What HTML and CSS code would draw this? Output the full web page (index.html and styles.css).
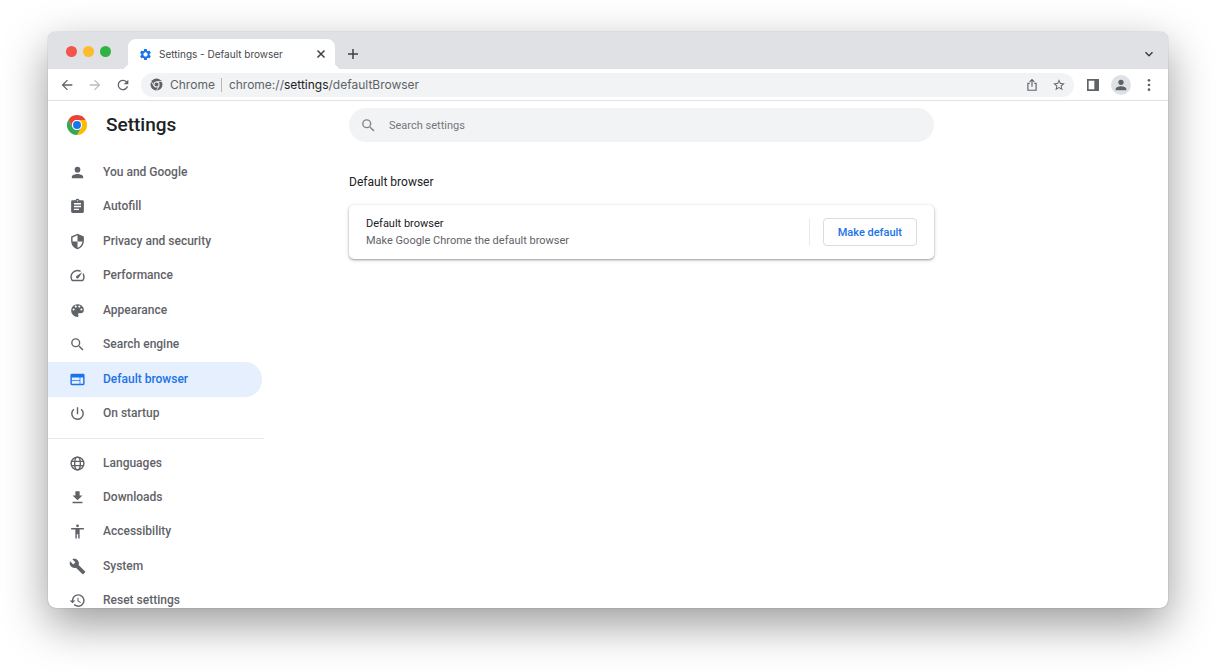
FILE: index.html
```
<!DOCTYPE html>
<html lang="en">
<head>
  <meta charset="UTF-8">
  <title>Settings - Default browser</title>
  <meta name="viewport" content="width=device-width, initial-scale=1.0">
  <link rel="stylesheet" href="styles.css">
</head>
<body>
  <div class="window">
    <!-- Tab strip -->
    <div class="tab-strip">
      <div class="lights">
        <button class="light red" aria-label="Close window"></button>
        <button class="light yellow" aria-label="Minimize"></button>
        <button class="light green" aria-label="Zoom"></button>
      </div>
      <div class="tab">
        <svg class="tab-icon" viewBox="0 0 24 24"><path fill-rule="evenodd" d="M19.400 13c0-.3.1-.6.1-1s0-.7-.1-1l2.200-1.700c.2-.2.2-.4.100-.6l-2.100-3.600c-.1-.2-.4-.3-.6-.2l-2.500 1c-.5-.4-1.100-.7-1.700-1l-.4-2.600c0-.2-.2-.4-.5-.4h-4c-.3 0-.5.2-.5.400l-.4 2.600c-.6.3-1.200.6-1.700 1l-2.500-1c-.2-.1-.5 0-.6.200L2.100 8.700c-.1.2-.1.5.1.600L4.500 11c0 .3-.1.600-.1 1s0 .7.1 1l-2.300 1.700c-.2.2-.2.4-.1.600l2.100 3.600c.1.2.4.3.6.2l2.500-1c.5.4 1.100.7 1.700 1l.4 2.600c0 .2.2.4.5.4h4c.3 0 .5-.2.5-.4l.4-2.600c.6-.3 1.200-.6 1.700-1l2.500 1c.2.1.5 0 .6-.2l2.100-3.600c.1-.2.1-.5-.1-.6zM12 16a4 4 0 1 1 0-8 4 4 0 0 1 0 8z"/></svg>
        <span class="tab-title">Settings - Default browser</span>
        <button class="icon-btn" aria-label="Close tab">
          <svg class="icon-close" viewBox="0 0 10 10"><path d="M1.500 1.500l7 7M8.500 1.500l-7 7"/></svg>
        </button>
      </div>
      <button class="icon-btn new-tab" aria-label="New tab">
        <svg class="icon-plus" viewBox="0 0 12 12"><path d="M6 1v10M1 6h10"/></svg>
      </button>
      <button class="icon-btn tab-search" aria-label="Search tabs">
        <svg class="icon-close" viewBox="0 0 10 10"><path d="M1.500 3.200L5 6.700l3.500-3.500"/></svg>
      </button>
    </div>

    <!-- Toolbar -->
    <div class="toolbar">
      <div class="nav-buttons">
        <button class="icon-btn" aria-label="Back">
          <svg viewBox="0 0 24 24"><path d="M20 11H7.800l5.600-5.600L12 4l-8 8 8 8 1.400-1.400L7.800 13H20z"/></svg>
        </button>
        <button class="icon-btn forward" aria-label="Forward">
          <svg viewBox="0 0 24 24"><path d="M12 4l-1.400 1.400 5.600 5.600H4v2h12.200l-5.600 5.600L12 20l8-8z"/></svg>
        </button>
        <button class="icon-btn" aria-label="Reload">
          <svg viewBox="0 0 24 24"><path d="M17.650 6.350A7.960 7.960 0 0 0 12 4a8 8 0 1 0 7.730 10h-2.080A6 6 0 1 1 12 6c1.660 0 3.140.690 4.220 1.780L13 11h7V4z"/></svg>
        </button>
      </div>
      <div class="omnibox">
        <svg class="site-icon" viewBox="0 0 24 24">
          <circle cx="12" cy="12" r="11"/>
          <path d="M12 6.500h10M7.200 14.700L2.400 6.400M16.800 14.700L12 23" stroke="#f1f3f4" stroke-width="1.500"/>
          <circle cx="12" cy="12" r="4.700" stroke="#f1f3f4" stroke-width="2"/>
        </svg>
        <span class="site-name">Chrome</span>
        <div class="url" role="textbox" contenteditable="true" aria-label="Address" spellcheck="false">chrome://<span class="host">settings</span>/defaultBrowser</div>
        <button class="icon-btn" aria-label="Share">
          <svg class="line" viewBox="0 0 24 24"><path d="M8.500 9H5v12h14V9h-3.500M12 15V3M8 6.500l4-4 4 4"/></svg>
        </button>
        <button class="icon-btn" aria-label="Bookmark">
          <svg viewBox="0 0 24 24"><path d="M22 9.240l-7.190-.62L12 2 9.190 8.630 2 9.240l5.460 4.730L5.820 21 12 17.270 18.180 21l-1.630-7.030zM12 15.400l-3.760 2.270 1-4.280-3.320-2.880 4.380-.38L12 6.100l1.710 4.040 4.380.38-3.320 2.880 1 4.280z"/></svg>
        </button>
      </div>
      <div class="actions">
        <button class="icon-btn" aria-label="Side panel">
          <svg viewBox="0 0 24 24"><path fill-rule="evenodd" d="M3 3h18v18H3zm2.500 2.500v13H14v-13z"/></svg>
        </button>
        <button class="icon-btn avatar" aria-label="Profile">
          <svg viewBox="0 0 24 24"><path d="M12 12a4 4 0 1 0 0-8 4 4 0 0 0 0 8zm0 2c-2.700 0-8 1.300-8 4v2h16v-2c0-2.700-5.300-4-8-4z"/></svg>
        </button>
        <button class="icon-btn" aria-label="Menu">
          <svg viewBox="0 0 24 24"><circle cx="12" cy="5" r="2"/><circle cx="12" cy="12" r="2"/><circle cx="12" cy="19" r="2"/></svg>
        </button>
      </div>
    </div>

    <!-- Settings page -->
    <div class="page">
      <aside class="sidebar">
        <div class="brand">
          <svg class="logo" viewBox="0 0 48 48">
            <path fill="#ea4335" d="M3.200 12a24 24 0 0 1 41.600 0H24a12 12 0 0 0-10.400 18z"/>
            <path fill="#fbbc04" d="M44.800 12A24 24 0 0 1 24 48l10.400-18A12 12 0 0 0 24 12z"/>
            <path fill="#34a853" d="M24 48A24 24 0 0 1 3.200 12l10.400 18a12 12 0 0 0 20.800 0z"/>
            <circle cx="24" cy="24" r="12" fill="#fff"/>
            <circle cx="24" cy="24" r="9.500" fill="#1a73e8"/>
          </svg>
          <h1>Settings</h1>
        </div>
        <nav>
          <ul class="menu">
            <li><a href="#people">
              <svg viewBox="0 0 24 24"><path d="M12 12a4 4 0 1 0 0-8 4 4 0 0 0 0 8zm0 2c-2.700 0-8 1.300-8 4v2h16v-2c0-2.700-5.300-4-8-4z"/></svg>
              You and Google</a></li>
            <li><a href="#autofill">
              <svg viewBox="0 0 24 24"><path d="M19 3h-4.180a3 3 0 0 0-5.640 0H5a2 2 0 0 0-2 2v14c0 1.100.9 2 2 2h14a2 2 0 0 0 2-2V5a2 2 0 0 0-2-2zm-7 0a1 1 0 1 1 0 2 1 1 0 0 1 0-2zm2 14H7v-2h7zm3-4H7v-2h10zm0-4H7V7h10z"/></svg>
              Autofill</a></li>
            <li><a href="#privacy">
              <svg viewBox="0 0 24 24"><path d="M12 1L3 5v6c0 5.550 3.840 10.740 9 12 5.160-1.260 9-6.450 9-12V5zm0 10.990h7c-.53 4.120-3.280 7.790-7 8.940V12H5V6.300l7-3.110z"/></svg>
              Privacy and security</a></li>
            <li><a href="#performance">
              <svg viewBox="0 0 24 24"><path d="M20.380 8.570l-1.230 1.850a8 8 0 0 1-.22 7.580H5.070A8 8 0 0 1 15.580 6.850l1.850-1.230A10 10 0 0 0 3.350 19a2 2 0 0 0 1.720 1h13.850a2 2 0 0 0 1.740-1 10 10 0 0 0-.27-10.440zm-9.790 6.840a2 2 0 0 0 2.830 0l5.660-8.490-8.490 5.660a2 2 0 0 0 0 2.830z"/></svg>
              Performance</a></li>
            <li><a href="#appearance">
              <svg viewBox="0 0 24 24"><path d="M12 3a9 9 0 0 0 0 18c.83 0 1.500-.67 1.500-1.500 0-.39-.15-.74-.39-1.010-.23-.26-.38-.61-.38-.99 0-.83.67-1.500 1.500-1.500H16a5 5 0 0 0 5-5c0-4.420-4.030-8-9-8zm-5.500 9a1.500 1.500 0 1 1 0-3 1.500 1.500 0 0 1 0 3zm3-4a1.500 1.500 0 1 1 0-3 1.500 1.500 0 0 1 0 3zm5 0a1.500 1.500 0 1 1 0-3 1.500 1.500 0 0 1 0 3zm3 4a1.500 1.500 0 1 1 0-3 1.500 1.500 0 0 1 0 3z"/></svg>
              Appearance</a></li>
            <li><a href="#search">
              <svg viewBox="0 0 24 24"><path d="M15.500 14h-.79l-.28-.27A6.470 6.470 0 0 0 16 9.500 6.500 6.500 0 1 0 9.500 16c1.610 0 3.090-.59 4.230-1.570l.27.28v.79l5 4.990L20.490 19zm-6 0a4.500 4.500 0 1 1 0-9 4.500 4.500 0 0 1 0 9z"/></svg>
              Search engine</a></li>
            <li><a href="#defaultBrowser" class="active" aria-current="page">
              <svg viewBox="0 0 24 24"><path d="M20 4H4c-1.100 0-2 .9-2 2v12c0 1.100.9 2 2 2h16c1.100 0 2-.9 2-2V6c0-1.100-.9-2-2-2zm-5 14H4v-4h11zm0-5H4V9h11zm5 5h-4V9h4z"/></svg>
              Default browser</a></li>
            <li><a href="#onStartup">
              <svg viewBox="0 0 24 24"><path d="M13 3h-2v10h2zm4.830 2.170l-1.420 1.420A6.920 6.920 0 0 1 19 12a7 7 0 1 1-11.420-5.420L6.170 5.170A9 9 0 1 0 21 12a8.930 8.930 0 0 0-3.170-6.830z"/></svg>
              On startup</a></li>
          </ul>
          <hr>
          <ul class="menu menu-advanced">
            <li><a href="#languages">
              <svg class="line" viewBox="0 0 24 24"><circle cx="12" cy="12" r="9"/><ellipse cx="12" cy="12" rx="4" ry="9"/><path d="M3.500 9h17M3.500 15h17"/></svg>
              Languages</a></li>
            <li><a href="#downloads">
              <svg viewBox="0 0 24 24"><path d="M19 9h-4V3H9v6H5l7 7zM5 18v2h14v-2z"/></svg>
              Downloads</a></li>
            <li><a href="#accessibility">
              <svg viewBox="0 0 24 24"><path d="M12 2a2 2 0 1 1 0 4 2 2 0 0 1 0-4zm9 7h-6v13h-2v-6h-2v6H9V9H3V7h18z"/></svg>
              Accessibility</a></li>
            <li><a href="#system">
              <svg viewBox="0 0 24 24"><path d="M22.700 19l-9.100-9.100c.9-2.300.4-5-1.500-6.900-2-2-5-2.400-7.400-1.300L9 6 6 9 1.600 4.700C.4 7.100.9 10.100 2.900 12.100c1.900 1.900 4.600 2.400 6.900 1.500l9.100 9.100c.4.4 1 .4 1.400 0l2.300-2.300c.5-.4.5-1.100.1-1.400z"/></svg>
              System</a></li>
            <li><a href="#reset">
              <svg viewBox="0 0 24 24"><path d="M13 3a9 9 0 0 0-9 9H1l3.890 3.890.07.14L9 12H6a7 7 0 1 1 2.060 4.940l-1.420 1.420A9 9 0 1 0 13 3zm-1 5v5l4.280 2.540.72-1.210-3.500-2.080V8z"/></svg>
              Reset settings</a></li>
          </ul>
        </nav>
      </aside>

      <main class="content">
        <div class="search-row">
          <label class="search" for="search">
            <svg viewBox="0 0 24 24"><path d="M15.500 14h-.79l-.28-.27A6.470 6.470 0 0 0 16 9.500 6.500 6.500 0 1 0 9.500 16c1.610 0 3.090-.59 4.230-1.570l.27.28v.79l5 4.990L20.490 19zm-6 0a4.500 4.500 0 1 1 0-9 4.500 4.500 0 0 1 0 9z"/></svg>
            <input type="text" id="search" placeholder="Search settings" aria-label="Search settings">
          </label>
        </div>
        <h2>Default browser</h2>
        <section class="card">
          <div class="card-text">
            <div>Default browser</div>
            <div class="secondary">Make Google Chrome the default browser</div>
          </div>
          <div class="card-action">
            <button class="make-default">Make default</button>
          </div>
        </section>
      </main>
    </div>
  </div>
</body>
</html>
```
FILE: styles.css
```
/* Base Styles */
* {
  box-sizing: border-box;
}

body {
  margin: 0;
  height: 100vh;
  padding: 32px 48px 64px;
  font-family: Roboto, sans-serif;
  font-size: 12px;
  color: #202124;
  background: #fff;
  overflow: hidden;
}

svg {
  display: block;
  flex: none;
  width: 17px;
  height: 17px;
  fill: currentColor;
}

svg.line {
  fill: none;
  stroke: currentColor;
  stroke-width: 2;
}

.window {
  display: flex;
  flex-direction: column;
  height: 100%;
  border-radius: 8px;
  background: #fff;
  overflow: hidden;
  box-shadow:
    0 0 1px rgba(0, 0, 0, 0.5),
    0 16px 45px rgba(0, 0, 0, 0.4);
}

.icon-btn {
  display: flex;
  align-items: center;
  justify-content: center;
  flex: none;
  width: 20px;
  height: 20px;
  padding: 0;
  border: none;
  background: none;
  color: #5f6368;
}

.icon-btn svg {
  width: 16px;
  height: 16px;
}

/* Tab Strip */
.tab-strip {
  display: flex;
  flex: none;
  height: 37px;
  padding: 7px 9px 0 18px;
  background: #dfe1e5;
  font-family: Inter, sans-serif;
}

.lights {
  display: flex;
  gap: 6px;
  width: 62px;
  padding-top: 7px;
}

.light {
  width: 11px;
  height: 11px;
  padding: 0;
  border: none;
  border-radius: 50%;
}

.red {
  background: #f25549;
}

.yellow {
  background: #fdbc2e;
}

.green {
  background: #2fb344;
}

.tab {
  position: relative;
  display: flex;
  align-items: center;
  width: 207px;
  padding: 0 4px 0 11px;
  border-radius: 8px 8px 0 0;
  background: #fff;
}

.tab::before,
.tab::after {
  content: "";
  position: absolute;
  bottom: 0;
  width: 7px;
  height: 7px;
}

.tab::before {
  right: 100%;
  background: radial-gradient(circle at 0 0, #dfe1e5 7px, #fff 7px);
}

.tab::after {
  left: 100%;
  background: radial-gradient(circle at 100% 0, #dfe1e5 7px, #fff 7px);
}

.tab-icon {
  width: 13px;
  height: 13px;
  color: #1a73e8;
}

.tab-title {
  flex: 1;
  margin-left: 7px;
  font-size: 10px;
  color: #45494d;
  white-space: nowrap;
}

.icon-btn .icon-close,
.icon-btn .icon-plus {
  width: 10px;
  height: 10px;
  stroke: #3c4043;
  stroke-width: 1.500;
  fill: none;
}

.icon-btn .icon-plus {
  width: 12px;
  height: 12px;
}

.new-tab {
  margin: 5px 0 0 8px;
}

.tab-search {
  margin: 5px 0 0 auto;
}

/* Toolbar */
.toolbar {
  display: flex;
  align-items: center;
  flex: none;
  height: 32px;
  padding: 0 9px;
  border-bottom: 1px solid #dfe1e4;
}

.nav-buttons,
.actions {
  display: flex;
  gap: 8px;
}

.forward {
  color: #babcbe;
}

.omnibox {
  display: flex;
  align-items: center;
  flex: 1;
  height: 24px;
  margin: 0 9px 0 8px;
  padding: 0 5px 0 9px;
  border-radius: 12px;
  background: #f1f3f4;
  font-family: Inter, sans-serif;
  color: #5f6368;
}

.site-icon {
  width: 13px;
  height: 13px;
}

.site-name {
  margin-left: 7px;
  padding-right: 6px;
  border-right: 1px solid #b5b8bc;
  line-height: 14px;
}

.url {
  flex: 1;
  margin-left: 7px;
  outline: none;
  white-space: nowrap;
}

.host {
  color: #202124;
}

.omnibox .icon-btn + .icon-btn {
  margin-left: 7px;
}

.omnibox .icon-btn svg {
  width: 14px;
  height: 14px;
}

.avatar {
  border-radius: 50%;
  background: #dee1e6;
}

/* Settings Page */
.page {
  display: flex;
  flex: 1;
  min-height: 0;
  overflow: hidden;
}

.sidebar {
  flex: none;
  width: 216px;
  color: #5f6368;
}

.brand {
  display: flex;
  align-items: center;
  gap: 19px;
  height: 47px;
  padding-left: 19px;
}

.logo {
  width: 20px;
  height: 20px;
}

h1 {
  margin: 0;
  font-size: 19px;
  font-weight: 500;
  color: #202124;
}

.menu {
  display: grid;
  grid-auto-rows: 1fr;
  min-height: 276px;
  margin: 7px 2px 0 0;
  padding: 0;
  list-style: none;
}

.menu-advanced {
  min-height: 172px;
}

.menu a {
  display: flex;
  align-items: center;
  gap: 17px;
  height: 100%;
  padding-left: 21px;
  border-radius: 0 17px 17px 0;
  font-weight: 500;
  line-height: 15px;
  color: #5f6368;
  text-decoration: none;
}

.menu a.active {
  background: #e6effe;
  color: #1a73e8;
}

.sidebar hr {
  margin: 7px 0 0;
  border: none;
  border-top: 1px solid #e8eaed;
}

.content {
  flex: 1;
  max-width: 670px;
  padding-left: 85px;
}

.search-row {
  display: flex;
  align-items: center;
  height: 48px;
}

.search {
  display: flex;
  align-items: center;
  flex: 1;
  gap: 12px;
  height: 34px;
  padding: 0 11px;
  border-radius: 17px;
  background: #f1f3f4;
  color: #80868b;
}

.search input {
  flex: 1;
  padding: 0;
  border: none;
  outline: none;
  background: none;
  font: inherit;
  font-size: 11px;
  color: #202124;
}

.search input::placeholder {
  color: #73777c;
}

h2 {
  margin: 24px 0 14px;
  font-size: 12px;
  font-weight: 400;
  line-height: 18px;
}

.card {
  display: flex;
  align-items: center;
  padding: 10px 17px;
  border-radius: 5px;
  font-size: 11px;
  line-height: 17px;
  box-shadow:
    0 1px 2px rgba(60, 64, 67, 0.4),
    0 1px 4px rgba(60, 64, 67, 0.2);
}

.card-text {
  flex: 1;
}

.secondary {
  color: #5f6368;
}

.card-action {
  padding-left: 13px;
  border-left: 1px solid #e8eaed;
}

.make-default {
  height: 28px;
  padding: 0 14px;
  border: 1px solid #dadce0;
  border-radius: 4px;
  background: #fff;
  font: inherit;
  font-weight: 500;
  color: #1a73e8;
}
```
